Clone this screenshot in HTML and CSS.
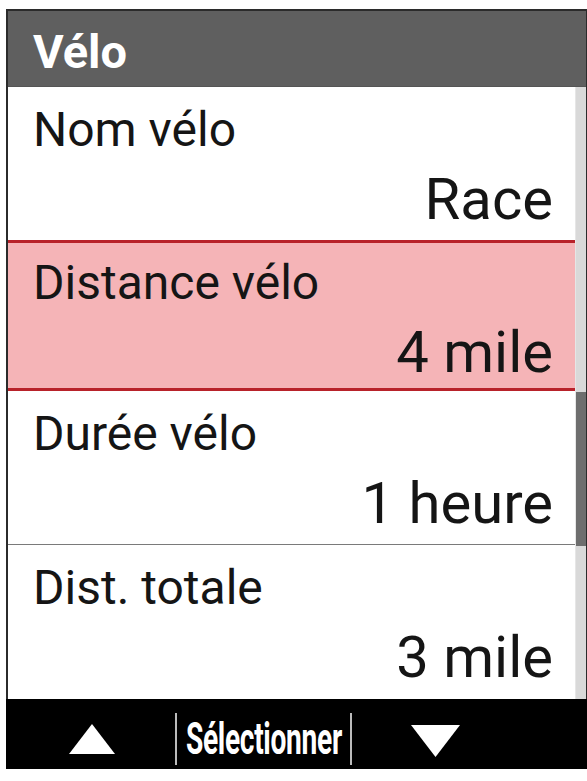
FILE: index.html
```html
<!DOCTYPE html>
<html lang="fr">
<head>
    <meta charset="UTF-8" />
    <title>Vélo</title>
    <link rel="stylesheet" href="styles.css">
</head>
<body>
    <div class="screen">
        <div class="title">Vélo</div>
        <div class="body">
            <div class="list">
                <div class="row">
                    <div class="label">Nom vélo</div>
                    <div class="value">Race</div>
                </div>
                <div class="row selected">
                    <div class="label">Distance vélo</div>
                    <div class="value">4 mile</div>
                </div>
                <div class="row">
                    <div class="label">Durée vélo</div>
                    <div class="value">1 heure</div>
                </div>
                <div class="row last">
                    <div class="label">Dist. totale</div>
                    <div class="value">3 mile</div>
                </div>
            </div>
            <div class="scroll">
                <div class="thumb"></div>
            </div>
        </div>
        <div class="footer">
            <div class="btn up">
                <svg width="46" height="30" viewBox="0 0 46 30"><polygon points="23,0 46,30 0,30" fill="#fff"/></svg>
            </div>
            <div class="btn mid">
                <span class="select">Sélectionner</span>
            </div>
            <div class="btn down">
                <svg width="49" height="32" viewBox="0 0 49 32"><polygon points="0,0 49,0 24.5,32" fill="#fff"/></svg>
            </div>
        </div>
    </div>
</body>
</html>
```

FILE: styles.css
```css
body {
    margin: 0;
    background: #fff;
    font-family: Roboto, "Noto Sans", sans-serif;
    color: #151515;
}

.screen {
    margin: 9px 0 0 6px;
    width: 578px;
    border: 2px solid #2b2b2b;
    border-bottom-width: 0;
}

.title {
    height: 72px;
    padding: 3px 0 0 25px;
    background: #5f5f5f;
    color: #fff;
    font-weight: bold;
    font-size: 47px;
    line-height: 75px;
    border-bottom: 1px solid #555;
}

.body {
    display: flex;
}

.list {
    flex: 1;
}

.row {
    height: 154px;
    box-sizing: border-box;
    padding: 15px 22px 0 25px;
    border-bottom: 1px solid #7a7a7a;
    background: #fff;
}

.row.last {
    border-bottom: 0;
}

.row.selected {
    background: #f5b4b7;
    border-top: 3px solid #b8222a;
    border-bottom: 3px solid #b8222a;
    height: 151px;
    padding-top: 12px;
    margin-top: -1px;
}

.label {
    font-size: 48px;
    line-height: 56px;
}

.value {
    font-size: 58px;
    line-height: 64px;
    text-align: right;
    margin-top: 9px;
}

.scroll {
    width: 10px;
    background: #d9d9d9;
    border-left: 1px solid #e6e6e6;
    display: flex;
    flex-direction: column;
    padding-top: 305px;
}

.thumb {
    height: 154px;
    background: #6e6e6e;
}

.footer {
    display: flex;
    align-items: center;
    height: 70px;
    box-sizing: border-box;
    background: #000;
    margin: 0 -2px;
    padding: 10px 2px 0;
}

.btn {
    display: flex;
    align-items: center;
    justify-content: center;
    height: 100%;
}

.up {
    width: 167px;
}

.mid {
    width: 173px;
    height: 52px;
    border-left: 2px solid #bbb;
    border-right: 2px solid #bbb;
}

.down {
    width: 166px;
    padding-top: 4px;
}

.select {
    display: inline-block;
    color: #fff;
    font-weight: bold;
    font-size: 44px;
    transform: scaleX(0.64);
    white-space: nowrap;
    letter-spacing: -0.5px;
}
```
